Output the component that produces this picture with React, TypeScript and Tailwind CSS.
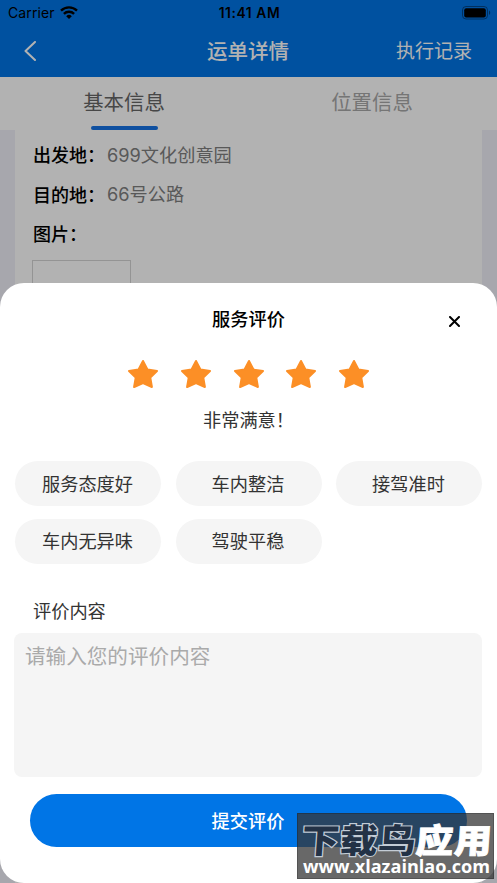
import React from 'react';

const tags = ['服务态度好', '车内整洁', '接驾准时', '车内无异味', '驾驶平稳'];

const details = [
  { label: '出发地：', value: '699文化创意园' },
  { label: '目的地：', value: '66号公路' },
  { label: '图片：', value: '' },
];

const StatusBar: React.FC = () => (
  <div className="grid h-[25px] grid-cols-3 items-center pl-2 pr-1.5 font-['Inter'] text-[14px] text-black">
    <div className="flex items-center gap-[5px]">
      <span className="tracking-[0.1px]">Carrier</span>
      <svg width="18" height="13" viewBox="0 0 18 13" fill="none" stroke="currentColor" strokeWidth="2.4">
        <path d="M1 4.6a11.5 11.5 0 0 1 16 0" />
        <path d="M3.9 7.9a7.3 7.3 0 0 1 10.2 0" />
        <path d="M9 13 6.2 10.2a4 4 0 0 1 5.6 0Z" fill="currentColor" stroke="none" />
      </svg>
    </div>
    <span className="pt-px text-center text-[13.8px] font-semibold tracking-[0.6px]">11:41 AM</span>
    <svg className="justify-self-end" width="29" height="14" viewBox="0 0 29 14">
      <rect x="0.5" y="0.5" width="25" height="12.5" rx="3.5" fill="none" stroke="#000" strokeOpacity="0.4" />
      <rect x="2.2" y="2.2" width="21.6" height="9.2" rx="2" />
      <path d="M27 4.6c1.6.6 1.6 3.8 0 4.4Z" fillOpacity="0.45" />
    </svg>
  </div>
);

const Star: React.FC = () => (
  <svg width="32" height="30" viewBox="0 0 32 30" fill="#fc8f26" stroke="#fc8f26" strokeWidth="2" strokeLinejoin="round">
    <path d="M16 2 20.6 10.6 30 12 23.3 18.6 24.9 28 16 24 7.1 28 8.7 18.6 2 12 11.4 10.6Z" />
  </svg>
);

const OrderPage: React.FC = () => (
  <div className="flex h-full flex-col bg-[#f0eff8]">
    <header className="h-[77px] bg-[#0075e6]">
      <StatusBar />
      <div className="grid h-[51px] grid-cols-3 items-center pl-6 pr-[25px] text-white">
        <svg width="13" height="20" viewBox="0 0 13 20" fill="none" stroke="currentColor" strokeWidth="2" strokeLinecap="round" strokeLinejoin="round">
          <path d="M11 1 1.5 10 11 19" />
        </svg>
        <h1 className="text-center text-[20.5px] font-medium">运单详情</h1>
        <span className="text-right text-[19px]">执行记录</span>
      </div>
    </header>

    <nav className="grid h-[53px] shrink-0 grid-cols-2 bg-white pr-px text-[20.4px] leading-[48px]">
      <div className="flex flex-col items-center text-[#666]">
        <span className="h-[49px]">基本信息</span>
        <span className="h-[4px] w-[67px] rounded-full bg-[#1673e6]" />
      </div>
      <div className="text-center text-[#a8a8a8]">位置信息</div>
    </nav>

    <section className="mx-[15px] flex-1 bg-white pl-[18px] pt-[5px] text-[18px]">
      {details.map((item) => (
        <div key={item.label} className="flex h-[39.5px] items-center">
          <span className="w-[74px] font-medium text-black">{item.label}</span>
          <span className="pt-px font-['Inter','Noto_Sans_CJK_SC',sans-serif] text-[18.2px] text-[#808080]">{item.value}</span>
        </div>
      ))}
      <div className="-ml-px mt-[6px] h-[99px] w-[99px] border border-[#d5d5d5]" />
    </section>
  </div>
);

const RatingSheet: React.FC = () => (
  <div className="flex h-[600px] w-full flex-col rounded-[24px] bg-white px-[15px] text-[18.2px] text-[#333]">
    <div className="grid h-[72px] grid-cols-3 items-center">
      <h2 className="col-start-2 text-center font-medium text-black">服务评价</h2>
      <svg className="mr-[22px] mt-[4px] justify-self-end" width="11" height="11" viewBox="0 0 11 11" stroke="#000" strokeWidth="2" strokeLinecap="round">
        <path d="M1 1 10 10M10 1 1 10" />
      </svg>
    </div>

    <div className="mt-[4px] flex justify-center gap-[20.8px]">
      {[1, 2, 3, 4, 5].map((n) => (
        <Star key={n} />
      ))}
    </div>
    <p className="mt-[17px] h-[28px] text-center leading-[27px]">非常满意！</p>

    <div className="mt-[27px] grid grid-cols-3 gap-x-[14.5px] gap-y-[12.5px]">
      {tags.map((tag) => (
        <button key={tag} className="h-[45px] rounded-full bg-[#f5f5f5] pr-px text-[18.2px]">
          {tag}
        </button>
      ))}
    </div>

    <h3 className="ml-[18px] mt-[33px] h-[27px] leading-[27px]">评价内容</h3>
    <textarea
      className="-ml-px mt-[9.5px] h-[144px] w-[468px] shrink-0 resize-none rounded-lg bg-[#f5f5f5] px-[11px] py-[7px] text-[20.6px] leading-[30px] outline-none placeholder:text-[#aaa]"
      placeholder="请输入您的评价内容"
    />
    <button className="mx-[15px] mt-[17px] h-[53px] shrink-0 rounded-full bg-[#0075e6] pr-px text-[18.2px] font-medium text-white">
      提交评价
    </button>
  </div>
);

const Watermark: React.FC = () => (
  <div className="absolute bottom-[4px] left-[297px] h-[66px] w-[197px] border border-black/20 bg-[#353535]/75">
    <svg className="overflow-visible" width="197" height="66" viewBox="0 0 197 66" fontFamily="'Noto Sans CJK SC', sans-serif" fontWeight="900">
      <g transform="translate(0 39) skewX(-4) scale(1 0.9)" fontSize="37.5">
        <text x="3" y="0" textLength="114" fill="#233246" stroke="#c3ccd6" strokeWidth="2.6" paintOrder="stroke">下载鸟</text>
        <text x="117" y="0" textLength="76" fill="#fff" stroke="#fff" strokeWidth="1">应用</text>
      </g>
      <text x="5" y="59" textLength="187" lengthAdjust="spacingAndGlyphs" fontSize="17" fontFamily="'Open Sans', sans-serif" fontWeight="700" fill="#fff">
        www.xlazainlao.com
      </text>
    </svg>
  </div>
);

const App: React.FC = () => {
  return (
    <div className="relative h-[883px] w-[497px] overflow-hidden font-['Noto_Sans_CJK_SC',sans-serif]">
      <OrderPage />
      {/* Dimmed backdrop with the bottom sheet */}
      <div className="absolute inset-0 flex items-end bg-black/30">
        <RatingSheet />
      </div>
      <Watermark />
    </div>
  );
};

export default App;
